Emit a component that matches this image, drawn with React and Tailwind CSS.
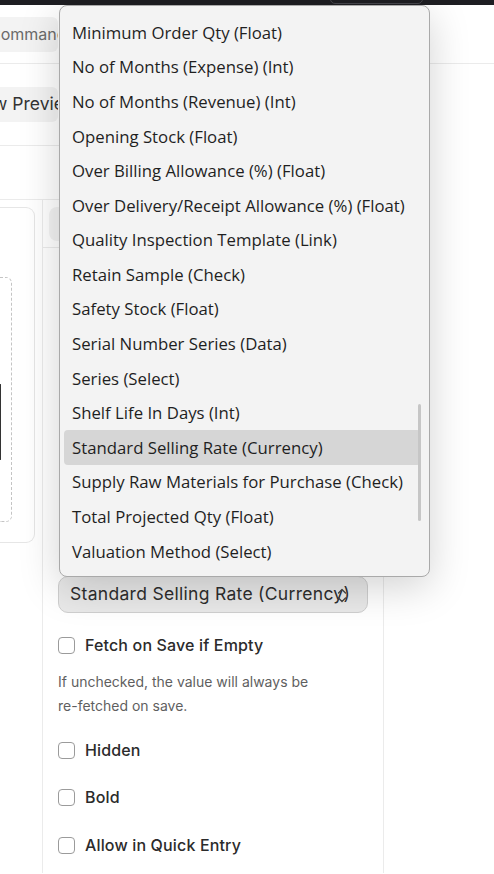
import React from 'react';

const options = [
  'Minimum Order Qty (Float)',
  'No of Months (Expense) (Int)',
  'No of Months (Revenue) (Int)',
  'Opening Stock (Float)',
  'Over Billing Allowance (%) (Float)',
  'Over Delivery/Receipt Allowance (%) (Float)',
  'Quality Inspection Template (Link)',
  'Retain Sample (Check)',
  'Safety Stock (Float)',
  'Serial Number Series (Data)',
  'Series (Select)',
  'Shelf Life In Days (Int)',
  'Standard Selling Rate (Currency)',
  'Supply Raw Materials for Purchase (Check)',
  'Total Projected Qty (Float)',
  'Valuation Method (Select)',
];

const selected = 'Standard Selling Rate (Currency)';

const Checkbox = ({ label }) => (
  <label className="flex items-center gap-[10px] text-[16px] tracking-[0.15px] font-medium text-[#2b2b2b]">
    <span className="w-[17px] h-[17px] rounded-[4px] border border-[#9b9b9b] bg-white shrink-0" />
    {label}
  </label>
);

const App = () => {
  return (
    <div
      className="relative w-[494px] h-[874px] overflow-hidden bg-white"
      style={{ fontFamily: 'Inter, "Noto Sans", sans-serif' }}
    >
      {/* Top bar */}
      <div className="relative h-[5px] bg-[#1e1e22]">
        <div className="absolute left-[330px] top-[-20px] w-[93px] h-[24px] rounded-[5px] border border-[#47474d]" />
      </div>

      {/* Toolbar */}
      <div className="h-[59px] border-b border-[#ebebeb] flex items-center">
        <div className="h-[35px] w-[58px] bg-[#f3f3f3] rounded-r-[6px] flex items-center overflow-hidden">
          <span className="text-[16px] text-[#6b6b6b] whitespace-nowrap -ml-[11px]">Command</span>
        </div>
      </div>

      {/* Page header */}
      <div className="h-[82px] w-[383px] border-b border-[#ebebeb] flex items-center">
        <div className="h-[35px] w-[58px] bg-[#f3f3f3] rounded-r-[6px] flex items-center overflow-hidden">
          <span className="text-[17.5px] text-[#333] whitespace-nowrap -ml-[30px]">New Preview</span>
        </div>
      </div>

      {/* Tabs row */}
      <div className="h-[54px] w-[383px] border-b border-[#ebebeb]" />

      {/* Body */}
      <div className="flex h-[673px]">
        <div className="w-[42px] pt-[7px]">
          <div className="w-[35px] h-[336px] rounded-r-[9px] border border-l-0 border-[#e6e6e6] pt-[69px]">
            <div className="w-[12px] h-[245px] rounded-r-[6px] border border-l-0 border-dashed border-[#c4c4c4] pt-[106px]">
              <div className="w-[1px] h-[76px] rounded-r-[4px] border border-l-0 border-[#333]" />
            </div>
          </div>
        </div>

        <div className="w-[342px] border-l border-r border-[#ebebeb]">
          <div className="h-[48px] border-b border-[#ebebeb] flex items-center px-[6px]">
            <div className="h-[34px] w-full rounded-[8px] bg-[#f3f3f3]" />
          </div>

          <div className="px-[15px] pt-[328px]">
            <div className="relative h-[37px] rounded-[10px] border border-[#cfcfcf] bg-[#e9e9e9] flex items-center pl-[11px]">
              <span className="text-[17.5px] text-[#2e2e2e] tracking-[0.3px] whitespace-nowrap">{selected}</span>
              <svg className="absolute left-[277px] top-[10px] w-[12px] h-[17px]" viewBox="0 0 12 17" fill="none" stroke="#444" strokeWidth="1.4" strokeLinecap="round" strokeLinejoin="round">
                <path d="M2.5 6 L6 2.5 L9.5 6" />
                <path d="M2.5 11 L6 14.5 L9.5 11" />
              </svg>
            </div>

            <div className="mt-[20px] flex flex-col">
              <Checkbox label="Fetch on Save if Empty" />
              <p className="mt-[13px] text-[14px] leading-[24px] text-[#5f5f5f]">
                If unchecked, the value will always be
                <br />
                re-fetched on save.
              </p>
              <div className="mt-[20px]">
                <Checkbox label="Hidden" />
              </div>
              <div className="mt-[23px]">
                <Checkbox label="Bold" />
              </div>
              <div className="mt-[24px]">
                <Checkbox label="Allow in Quick Entry" />
              </div>
            </div>
          </div>
        </div>

        <div className="flex-1" />
      </div>

      {/* Open select list */}
      <div
        className="absolute left-[59px] top-[5px] w-[371px] h-[572px] rounded-[8px] border border-[#a9a9a9] bg-[#f3f3f3] shadow-[0_10px_40px_rgba(0,0,0,0.18)] pt-[9px] px-[4px]"
        style={{ fontFamily: '"Open Sans", "Noto Sans", sans-serif' }}
      >
        <div className="flex flex-col">
          {options.map((opt) => (
            <div
              key={opt}
              className={
                'h-[34.6px] flex items-center pl-[8px] pr-[4px] text-[16.75px] text-[#1f1f1f] whitespace-nowrap rounded-[4px] mr-[4px] ' +
                (opt === selected ? 'bg-[#d6d6d6]' : '')
              }
            >
              {opt}
            </div>
          ))}
        </div>
        <div className="absolute left-[358px] top-[398px] w-[3px] h-[117px] rounded-full bg-[#c6c6c6]" />
      </div>
    </div>
  );
};

export default App;
